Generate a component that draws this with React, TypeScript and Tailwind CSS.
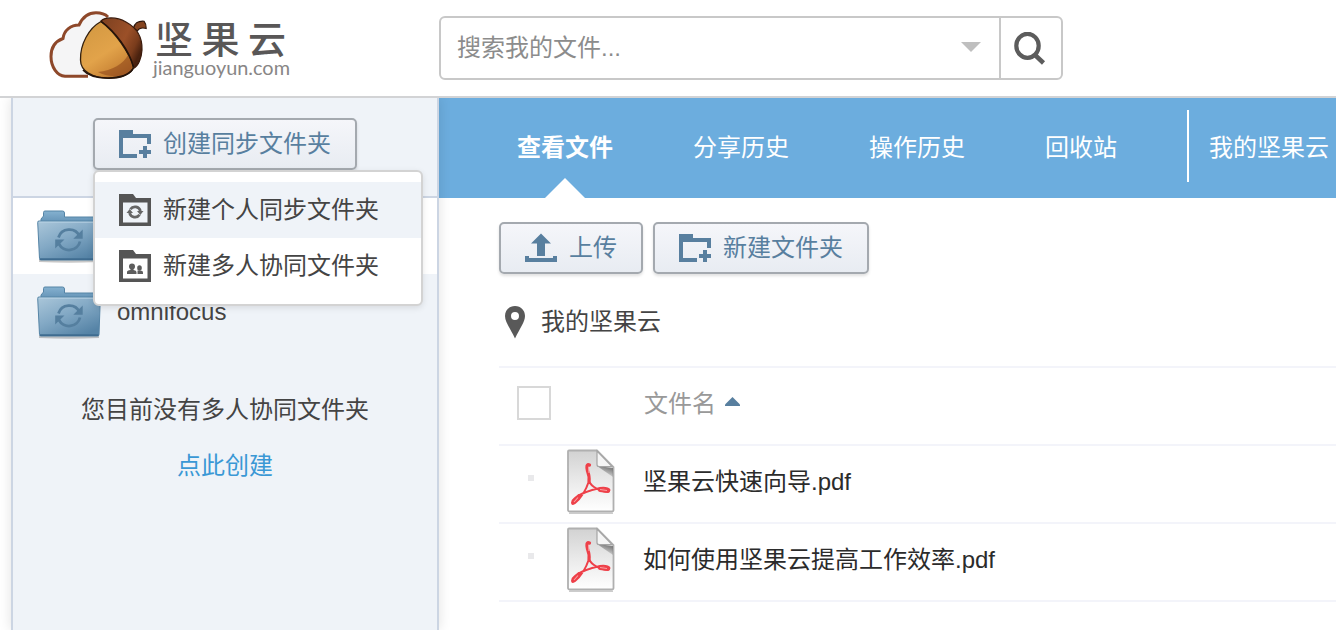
import type { ReactNode } from "react";

function Logo() {
  return (
    <svg width="250" height="74" viewBox="46 8 250 74" className="block" aria-label="坚果云">
      <defs>
        <linearGradient id="nut" x1="0.2" y1="0.1" x2="0.75" y2="1">
          <stop offset="0" stopColor="#d59a43" />
          <stop offset="0.5" stopColor="#e2a34a" />
          <stop offset="0.78" stopColor="#cf8b3a" />
          <stop offset="1" stopColor="#a8622a" />
        </linearGradient>
        <linearGradient id="cap" x1="0" y1="0" x2="1" y2="0.6">
          <stop offset="0" stopColor="#7c4020" />
          <stop offset="0.6" stopColor="#9b5028" />
          <stop offset="0.85" stopColor="#7a3c1c" />
          <stop offset="1" stopColor="#4a220f" />
        </linearGradient>
      </defs>
      <path d="M88 76.300 H65 C57 75.500 51 67 51 56.500 C51 47 56 41 63 38.500 C64 30 71 25 79 25 C83 16.500 89 12.800 96 12.800 C101 12.800 105 14 108 17" fill="#f5f5f6" stroke="#8e482a" strokeWidth="3" />
      <path d="M133.500 28 C134.500 24 138 20.800 144 21.200 C145.500 23 146.300 25.500 146.200 28.500 C142 27.500 139 28 137.500 31 Z" fill="#84431f" stroke="#2c1308" strokeWidth="1.1" />
      <path d="M101 21 C105 17 116 16.500 126 22 C137 28 142.500 38 142 50 C141.500 58 138.500 66 133.500 68.500 C129 53 115 32 101 21 Z" fill="url(#cap)" stroke="#3a1a0b" strokeWidth="1.2" />
      <path d="M101 21.500 C89 28 80 44 80.500 60 C80.500 71 92 78 109 78.300 C122 78.300 132 73.500 133.300 67 C130 54 116 33 101 21.500 Z" fill="url(#nut)" stroke="#33200f" strokeWidth="1.300" />
      <path d="M98 72 C112 71 124 63 128 55 C132 62 133 66 131 70 C125 78 107 77.500 98 72 Z" fill="#9a531f" opacity="0.7" />
      <path d="M101 21.500 C115 31 129 50 133.500 67" fill="none" stroke="#24130a" strokeWidth="1.500" />
      <path d="M83 70 C92 80.500 124 81 133 69" fill="none" stroke="#24130a" strokeWidth="1.600" />
      <text x="155" y="53" fontSize="38" fontWeight="500" fill="#595757" textLength="131" lengthAdjust="spacing" fontFamily="'Noto Sans CJK SC', sans-serif">坚果云</text>
      <text x="153" y="74.500" fontSize="20" fill="#888686" textLength="137" lengthAdjust="spacingAndGlyphs" fontFamily="Lato, sans-serif">jianguoyun.com</text>
    </svg>
  );
}

function FolderPlusIcon() {
  return (
    <svg width="32" height="32" viewBox="0 0 32 32" fill="#587f9f" className="block shrink-0">
      <path d="M0 2h14v4h18v10h-4v-6H4v16h14v4H0z" />
      <path d="M24 18h4v4h4v4h-4v4h-4v-4h-4v-4h4z" />
    </svg>
  );
}

function UploadIcon() {
  return (
    <svg width="32" height="32" viewBox="0 0 32 32" fill="#587f9f" className="block shrink-0">
      <path d="M16 1.500 L26 11.500 H20 V24 H12 V11.500 H6 Z" />
      <path d="M0 24h4v2h24v-2h4v6H0z" />
    </svg>
  );
}

function MenuFolder({ children }: { children: ReactNode }) {
  return (
    <svg width="32" height="32" viewBox="0 0 32 32" className="block shrink-0">
      <path d="M0 0h14l3 4h15v28H0zM4 8.500v20h24.500v-20z" fill="#555" fillRule="evenodd" />
      {children}
    </svg>
  );
}

function SyncFolder() {
  return (
    <svg width="64" height="56" viewBox="0 0 64 56" className="block shrink-0">
      <defs>
        <linearGradient id="front" x1="0" y1="0" x2="0.7" y2="1">
          <stop offset="0" stopColor="#abc7da" />
          <stop offset="0.5" stopColor="#83a9c5" />
          <stop offset="1" stopColor="#5583a6" />
        </linearGradient>
        <linearGradient id="back" x1="0" y1="0" x2="0" y2="1">
          <stop offset="0" stopColor="#85b1d0" />
          <stop offset="1" stopColor="#6392b5" />
        </linearGradient>
      </defs>
      <path d="M2 50 H62 V53 Q32 54.500 2 53Z" fill="#000" opacity="0.22" />
      <path d="M4 14 V10 L6.500 7 V3.500 Q6.500 2 8 2 H25.500 Q27.500 2 27.500 4 V8 H60 Q61.500 8 61.500 9.500 V14 Z" fill="url(#back)" stroke="#5584a6" strokeWidth="1" />
      <path d="M0.700 13.500 Q0.500 12 2 12 H62 Q63.500 12 63.300 13.500 L62 49.500 Q62 51 60.500 51 H4 Q2.500 51 2.500 49.500 Z" fill="url(#front)" stroke="#5584a6" strokeWidth="1" />
      <path d="M2 13.200h60" stroke="#b5d0e2" strokeWidth="1" />
      <path d="M3 50.200h58.500" stroke="#3f6c90" strokeWidth="1.800" />
      <g fill="none" stroke="#557f9f" strokeWidth="2.800">
        <path d="M21.500 28.500 A11.200 10.800 0 0 1 42.500 27" />
        <path d="M43 32.500 A11.200 10.800 0 0 1 22 35" />
      </g>
      <path d="M45.700 20.500 V29.800 H36.300 Z M18.200 39.500 V30.500 H27.500 Z" fill="#557f9f" />
    </svg>
  );
}

function PdfIcon() {
  return (
    <svg width="50" height="66" viewBox="0 0 50 66" className="block shrink-0">
      <defs>
        <linearGradient id="page" x1="0" y1="0" x2="0" y2="1">
          <stop offset="0" stopColor="#d2d2d2" />
          <stop offset="0.55" stopColor="#ececec" />
          <stop offset="1" stopColor="#fff" />
        </linearGradient>
        <linearGradient id="fold" x1="0.7" y1="0.2" x2="0.3" y2="1">
          <stop offset="0" stopColor="#666" stopOpacity="0.75" />
          <stop offset="1" stopColor="#777" stopOpacity="0" />
        </linearGradient>
      </defs>
      <path d="M3 64.200H47" stroke="#ccc" strokeWidth="1.500" />
      <path d="M3 1.500 H31 L47.500 18 V61 Q47.500 62.500 45.500 62.500 H4 Q2 62.500 2 61 V2.500 Q2 1.500 3 1.500Z" fill="url(#page)" stroke="#b0b0b0" strokeWidth="1.800" />
      <path d="M31 17 L47 19 V28 Z" fill="url(#fold)" />
      <path d="M31 2 L46 17.500 H33 Q31 17.500 31 15.500Z" fill="#f5f5f5" stroke="#a5a5a5" strokeWidth="1.200" />
      <g fill="none" stroke="#ee4049" strokeLinecap="round" strokeLinejoin="round">
        <path d="M23.500 16 C20.500 14.500 20.500 18 21.500 22 C23 26 23.500 29 23 32" strokeWidth="3.200" />
        <path d="M23 32 C20 41 14 50 9 54 C5 57 5 52 9 49 C15 44 25 41 34 39 C40 38 45 40 43 42 C40 44 32 41 28 38 C25 36 23 33 23 30" strokeWidth="2" />
        <path d="M34 41 L42 42 M8 52.500 L13 47" strokeWidth="4" />
      </g>
      <path d="M22.500 18 L23 24 M8 53 L12 48.500 M34 40.500 L41 41.500" stroke="#f8a3a5" strokeWidth="1.100" />
    </svg>
  );
}

function ToolButton({ icon, label }: { icon: ReactNode; label: string }) {
  return (
    <button className="flex h-[52px] shrink-0 items-center gap-3 rounded-[5px] border-2 border-[#a4a9af] bg-linear-to-b from-[#f5f6fa] to-[#e8ecf2] px-6 text-[#587f9f] shadow-[0_2px_3px_rgba(0,0,0,0.12)]">
      {icon}
      <span className="whitespace-nowrap leading-[36px]">{label}</span>
    </button>
  );
}

function SearchBar() {
  return (
    <div className="flex h-16 w-[624px] rounded-md border-2 border-[#c8c8c8] bg-white">
      <div className="flex flex-1 items-center justify-between pr-[18px] pl-4 text-[#8c8c8c]">
        <span className="leading-[36px]">搜索我的文件...</span>
        <svg width="20" height="10" viewBox="0 0 20 10" className="mt-[-2px] block">
          <path d="M0 0h20L10 10z" fill="#bfbfbf" />
        </svg>
      </div>
      <div className="flex w-[62px] border-l-2 border-[#c8c8c8] pt-[14px] pl-[13px]">
        <svg width="32" height="34" viewBox="0 0 32 34" className="block" fill="none" stroke="#5c5c5c">
          <ellipse cx="13.500" cy="13.800" rx="11.200" ry="12" strokeWidth="4.200" />
          <path d="M21 23 L29.500 31" strokeWidth="4.500" />
        </svg>
      </div>
    </div>
  );
}

function CreateMenu() {
  return (
    <div className="absolute top-[72px] left-[80px] z-10 w-[330px] rounded-md border-2 border-[#d3d3d3] bg-white pt-[10px] pb-[10px] text-[#444] shadow-[0_2px_6px_rgba(0,0,0,0.1)]">
      <div className="flex h-14 items-center gap-3 bg-[#eff3f8] pl-6">
        <MenuFolder>
          <g fill="none" stroke="#666" strokeWidth="2.800">
            <path d="M11.400 15.200 A5.600 5.600 0 0 1 21.400 17" />
            <path d="M20.600 20.800 A5.600 5.600 0 0 1 10.600 19" />
          </g>
          <path d="M18 17 H24.500 L21.300 21Z M7.500 19 H14 L10.700 15Z" fill="#666" />
        </MenuFolder>
        <span className="leading-[36px]">新建个人同步文件夹</span>
      </div>
      <div className="flex h-14 items-center gap-3 pl-6">
        <MenuFolder>
          <g fill="#5d5d5d">
            <circle cx="13" cy="16.500" r="3" />
            <path d="M8 24 V22 Q8 20.500 11.500 20 V18 H14.500 V20 Q17.500 20.500 17.500 22 V24Z" />
            <ellipse cx="20.500" cy="18" rx="2.300" ry="2.800" />
            <path d="M18.500 24 V20.500 H21 Q24 20.500 24 22.500 V24Z" />
          </g>
        </MenuFolder>
        <span className="leading-[36px]">新建多人协同文件夹</span>
      </div>
    </div>
  );
}

function Sidebar() {
  return (
    <aside className="relative ml-[11px] w-[428px] shrink-0 border-x-2 border-[#ccd5e3] bg-[#eff3f8] text-[#444] shadow-[0_0_12px_rgba(0,0,0,0.12)]">
      <div className="flex h-[100px] border-b-2 border-[#ccd5e3] pt-5 pl-20">
        <ToolButton icon={<FolderPlusIcon />} label="创建同步文件夹" />
      </div>
      <CreateMenu />
      <div className="flex h-[76px] bg-white pt-[11px] pl-6">
        <SyncFolder />
      </div>
      <div className="flex h-[76px] gap-4 pt-[11px] pl-6">
        <SyncFolder />
        <span className="mt-[9px] h-9 leading-[36px]">omnifocus</span>
      </div>
      <div className="flex flex-col items-center gap-5 pt-[42px]">
        <span className="leading-[36px]">您目前没有多人协同文件夹</span>
        <a className="leading-[36px] text-[#3a98d5]">点此创建</a>
      </div>
    </aside>
  );
}

function NavBar() {
  return (
    <nav className="flex h-[100px] bg-[#6cadde] pl-[38px] whitespace-nowrap text-white">
      <div className="relative w-44 shrink-0 text-center leading-[100px] font-bold">
        查看文件
        <svg width="40" height="20" viewBox="0 0 40 20" className="absolute bottom-0 left-[68px] block">
          <path d="M0 20L20 0l20 20z" fill="#fff" />
        </svg>
      </div>
      <div className="w-44 shrink-0 text-center leading-[100px]">分享历史</div>
      <div className="w-44 shrink-0 text-center leading-[100px]">操作历史</div>
      <div className="w-[182px] shrink-0 pl-10 leading-[100px]">回收站</div>
      <div className="my-3 h-[72px] border-l-2 border-white pl-5 leading-[76px]">我的坚果云</div>
    </nav>
  );
}

function FileRow({ name }: { name: string }) {
  return (
    <div className="flex h-[78px] items-center border-b-2 border-[#f3f4fa]">
      <div className="mt-[-12px] ml-[29px] h-[6px] w-[6px] bg-[#e9e9eb]" />
      <div className="ml-8 self-start pt-[3px]">
        <PdfIcon />
      </div>
      <span className="mt-[-4px] ml-[27px] leading-[36px] text-[#2b2b2b]">{name}</span>
    </div>
  );
}

export default function App() {
  return (
    <div className="flex h-[630px] w-[1336px] flex-col overflow-hidden bg-white font-['Liberation_Sans','Noto_Sans_CJK_SC',sans-serif] text-2xl">
      <header className="relative z-10 flex h-[98px] shrink-0 border-b-2 border-[#d2d3d5] bg-white">
        <div className="w-[439px] pt-2 pl-[46px]">
          <Logo />
        </div>
        <div className="pt-4">
          <SearchBar />
        </div>
      </header>
      <div className="flex min-h-0 flex-1">
        <Sidebar />
        <main className="min-w-0 flex-1">
          <NavBar />
          <div className="pl-[60px]">
            <div className="flex gap-[10px] pt-6">
              <ToolButton icon={<UploadIcon />} label="上传" />
              <ToolButton icon={<FolderPlusIcon />} label="新建文件夹" />
            </div>
            <div className="flex h-[94px] items-center gap-4 border-b-2 border-[#f3f4fa] pt-1 pl-[6px] text-[#444]">
              <svg width="20" height="33" viewBox="0 0 20 33" className="block">
                <path d="M10 0C4 0 0 4.500 0 10c0 6 5 12 10 22.500C15 22 20 16 20 10 20 4.500 16 0 10 0zm0 6a4 4 0 1 1 0 8 4 4 0 0 1 0-8z" fill="#595959" fillRule="evenodd" />
              </svg>
              <span className="leading-[36px]">我的坚果云</span>
            </div>
            <div className="flex h-[78px] items-center border-b-2 border-[#f3f4fa] pl-[18px] text-[#999]">
              <div className="mt-[-6px] h-[34px] w-[34px] border-2 border-[#d8d8d8]" />
              <span className="mt-[-4px] ml-[93px] leading-[36px]">文件名</span>
              <svg width="15" height="9" viewBox="0 0 15 9" className="mt-[-9px] ml-[9px] block">
                <path d="M7.500 0L15 7.500V9H0V7.500z" fill="#587f9f" />
              </svg>
            </div>
            <FileRow name="坚果云快速向导.pdf" />
            <FileRow name="如何使用坚果云提高工作效率.pdf" />
          </div>
        </main>
      </div>
    </div>
  );
}
